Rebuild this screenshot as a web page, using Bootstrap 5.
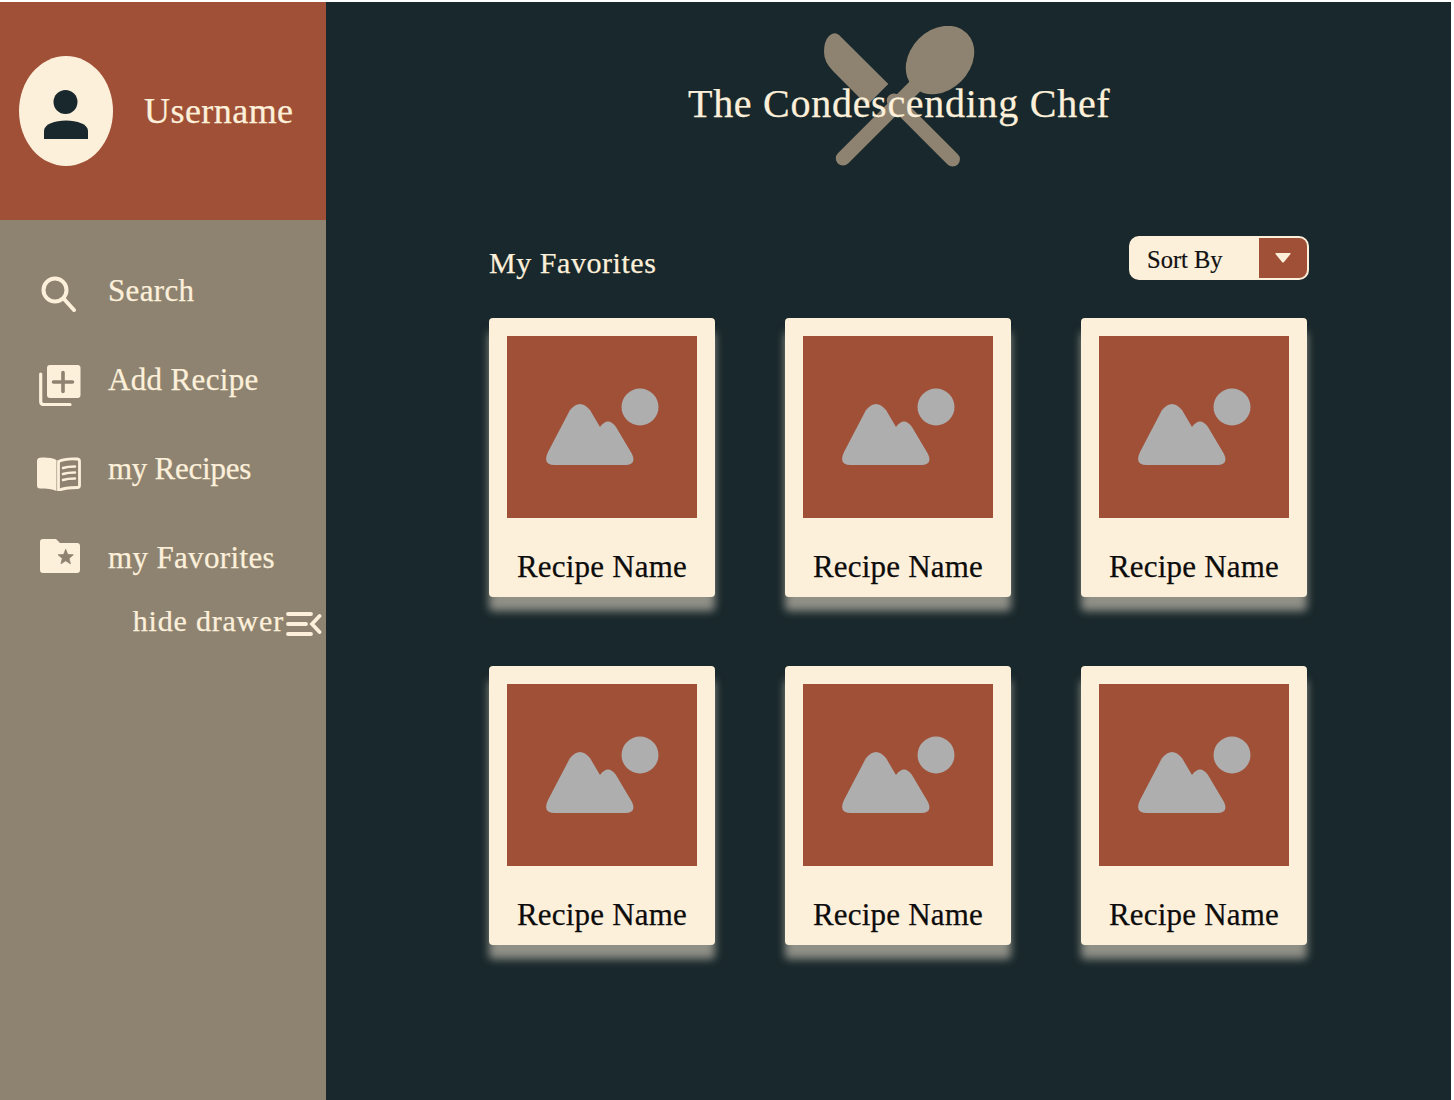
<!DOCTYPE html>
<html lang="en">
<head>
<meta charset="utf-8">
<title>The Condescending Chef</title>
<link rel="stylesheet" href="https://cdn.jsdelivr.net/npm/bootstrap@5.3.0/dist/css/bootstrap.min.css">
<style>
html,body{height:1100px;overflow:hidden}
body{background:#fff;font-family:"Liberation Serif",serif;color:#fdf0db;padding-top:2px;padding-right:3px;-webkit-text-stroke:.25px}
.shell{height:1098px;background:#19282c}
.drawer{width:326px;background:#8e8370}
.drawer-head{height:218px;background:#a05036;padding:54px 0 0 19px}
.avatar{width:94px;height:110px;border-radius:50%;background:#fdf0db}
.avatar svg{margin-top:8px}
.uname{font-size:36px;height:110px;line-height:110px;margin-left:31px;letter-spacing:.45px}
.draw-nav{padding:53px 0 0 37px}
.draw-item{height:36px;margin-bottom:53px;font-size:31px;line-height:36px;letter-spacing:.35px}
.draw-ico{width:71px;flex:none}
.draw-ico svg{display:block}
.ico-search{margin:5px 0 0 4px}
.ico-add{margin:10px 0 0 2px}
.ico-book{margin:9px 0 0 0}
.ico-fold{margin:-5px 0 0 2px}
.tight-text{letter-spacing:-.25px}
.hide-row{font-size:30px;line-height:36px;margin-top:27px;padding-right:4px;letter-spacing:.8px}
.hide-row svg{margin:5px 0 0 2px;flex:none}
.main-pane{padding:0 142px 0 163px}
.title-wrap{height:216px;position:relative}
.title-logo{position:absolute;left:335px;top:24px}
.app-title{position:absolute;left:199px;top:79px;font-size:40px;line-height:46px;margin:0;letter-spacing:.72px;white-space:nowrap}
.sec-head{height:100px;padding:18px 0 0}
.sec-title{font-size:30px;line-height:54px;margin:0;letter-spacing:.55px}
.sort-box{width:180px;height:44px;background:#fdf0db;border:2px solid #fdf0db;border-radius:10px;overflow:hidden;color:#111;font-size:24.5px;padding-left:16px;-webkit-text-stroke:.2px}
.sort-caret{width:48px;background:#a05036}
.recipes{display:grid;grid-template-columns:repeat(3,226px);column-gap:70px;row-gap:69px}
.rec-card{height:279px;background:#fdf0db;border-radius:4px;padding:18px;box-shadow:0 14px 8px rgba(253,240,219,.52)}
.rec-img{height:182px;background:#a05036}
.rec-name{font-size:31px;line-height:36px;margin-top:31px;text-align:center;letter-spacing:.2px;color:#0c0c0c}
</style>
</head>
<body>
<div class="shell d-flex">
  <aside class="drawer flex-shrink-0">
    <div class="drawer-head d-flex align-items-start">
      <div class="avatar d-flex align-items-center justify-content-center">
        <svg width="46" height="50" viewBox="0 0 46 50"><circle cx="22.500" cy="12" r="12" fill="#19282c"/><path d="M1 49V41C1 34 12 30.500 23 30.500s22 3.500 22 10.500v8z" fill="#19282c"/></svg>
      </div>
      <div class="uname">Username</div>
    </div>
    <nav class="draw-nav">
      <div class="draw-item d-flex align-items-center">
        <span class="draw-ico"><svg class="ico-search" width="36" height="36" viewBox="0 0 36 36" fill="none" stroke="#fdf0db" stroke-width="4" stroke-linecap="round"><circle cx="14" cy="14" r="11.500"/><path d="M23 23l10 11"/></svg></span>Search
      </div>
      <div class="draw-item d-flex align-items-center">
        <span class="draw-ico"><svg class="ico-add" width="42" height="41" viewBox="0 0 42 41"><path d="M1.700 9v27.500q0 3 3 3H31" fill="none" stroke="#fdf0db" stroke-width="3.200" stroke-linecap="round"/><rect x="8" y="0" width="33.500" height="33" rx="3" fill="#fdf0db"/><path d="M24 7.500v19M14.500 17h19" stroke="#8e8370" stroke-width="3.600" stroke-linecap="round"/></svg></span>Add Recipe
      </div>
      <div class="draw-item d-flex align-items-center">
        <span class="draw-ico"><svg class="ico-book" width="44" height="34" viewBox="0 0 44 34"><path d="M0 4q0-3 3-3.200c6-.5 12 0 16.500 2.200v31c-4-2-10-2.500-16.500-2.500q-3 0-3-3z" fill="#fdf0db"/><path d="M21.500 4.500c4-2 12-3 19-2.500 1.500.2 2 1 2 2.500v24c0 1.500-.6 2-2 2-7 0-14 .5-19 3z" fill="none" stroke="#fdf0db" stroke-width="2.800"/><path d="M26 11c3-1 8-1.500 12-1.500M26 17c3-1 8-1.500 12-1.500M26 23c3-1 8-1.500 12-1.500" fill="none" stroke="#fdf0db" stroke-width="2.500" stroke-linecap="round"/></svg></span><span class="tight-text">my Recipes</span>
      </div>
      <div class="draw-item d-flex align-items-center mb-0">
        <span class="draw-ico"><svg class="ico-fold" width="42" height="36" viewBox="0 0 42 36"><path d="M1 4q0-3 3-3h13l4 4h17q3 0 3 3v24q0 3-3 3H4q-3 0-3-3z" fill="#fdf0db"/><polygon transform="translate(26.700 19.300)" points="0,-8 2.100,-2.800 7.600,-2.500 3.400,1.100 4.700,6.500 0,3.500 -4.700,6.500 -3.400,1.100 -7.600,-2.500 -2.100,-2.800" fill="#8e8370" stroke="#8e8370" stroke-width=".8" stroke-linejoin="round"/></svg></span>my Favorites
      </div>
      <div class="hide-row d-flex justify-content-end align-items-center">hide drawer<svg width="36" height="24" viewBox="0 0 36 24" fill="none" stroke="#fdf0db" stroke-width="3.800" stroke-linecap="round"><path d="M2 2h23M2 12h18M2 22h23"/><path d="M33.500 4L26 12l7.500 8"/></svg></div>
    </nav>
  </aside>
  <main class="main-pane flex-grow-1">
    <div class="title-wrap">
      <svg class="title-logo" width="152" height="142" viewBox="0 0 152 142" fill="#8e8370"><path d="M5 10Q11 4 17 11L64.300 58 43 79.300 9 45Q0 36 0 26 0 15 5 10z"/><path d="M70 74.700l58.700 58.600M19 132.300l81-81" fill="none" stroke="#8e8370" stroke-width="14.500" stroke-linecap="round"/><ellipse cx="116" cy="34" rx="38" ry="30" transform="rotate(-45 116 34)"/></svg>
      <h1 class="app-title fw-normal">The Condescending Chef</h1>
    </div>
    <div class="sec-head d-flex justify-content-between align-items-start">
      <h2 class="sec-title fw-normal">My Favorites</h2>
      <div class="sort-box d-flex justify-content-between align-items-center">
        <span class="mt-1">Sort By</span>
        <span class="sort-caret h-100 d-flex align-items-center justify-content-center"><svg width="16" height="10" viewBox="0 0 16 10"><path d="M1 0h14q1 0 .5 1L9 9q-1 1-2 0L.5 1Q0 0 1 0z" fill="#fdf0db"/></svg></span>
      </div>
    </div>
    <div class="recipes">
      <div class="rec-card"><div class="rec-img d-flex align-items-center justify-content-center"><svg width="114" height="78" viewBox="0 0 114 78" fill="#aeaeae"><circle cx="95" cy="19" r="18.500"/><path d="M25 22Q35 10 45 22L55 39Q63 28 71 39L87 66Q92 77 80 77H10Q-3 77 3 64z"/></svg></div><div class="rec-name">Recipe Name</div></div>
      <div class="rec-card"><div class="rec-img d-flex align-items-center justify-content-center"><svg width="114" height="78" viewBox="0 0 114 78" fill="#aeaeae"><circle cx="95" cy="19" r="18.500"/><path d="M25 22Q35 10 45 22L55 39Q63 28 71 39L87 66Q92 77 80 77H10Q-3 77 3 64z"/></svg></div><div class="rec-name">Recipe Name</div></div>
      <div class="rec-card"><div class="rec-img d-flex align-items-center justify-content-center"><svg width="114" height="78" viewBox="0 0 114 78" fill="#aeaeae"><circle cx="95" cy="19" r="18.500"/><path d="M25 22Q35 10 45 22L55 39Q63 28 71 39L87 66Q92 77 80 77H10Q-3 77 3 64z"/></svg></div><div class="rec-name">Recipe Name</div></div>
      <div class="rec-card"><div class="rec-img d-flex align-items-center justify-content-center"><svg width="114" height="78" viewBox="0 0 114 78" fill="#aeaeae"><circle cx="95" cy="19" r="18.500"/><path d="M25 22Q35 10 45 22L55 39Q63 28 71 39L87 66Q92 77 80 77H10Q-3 77 3 64z"/></svg></div><div class="rec-name">Recipe Name</div></div>
      <div class="rec-card"><div class="rec-img d-flex align-items-center justify-content-center"><svg width="114" height="78" viewBox="0 0 114 78" fill="#aeaeae"><circle cx="95" cy="19" r="18.500"/><path d="M25 22Q35 10 45 22L55 39Q63 28 71 39L87 66Q92 77 80 77H10Q-3 77 3 64z"/></svg></div><div class="rec-name">Recipe Name</div></div>
      <div class="rec-card"><div class="rec-img d-flex align-items-center justify-content-center"><svg width="114" height="78" viewBox="0 0 114 78" fill="#aeaeae"><circle cx="95" cy="19" r="18.500"/><path d="M25 22Q35 10 45 22L55 39Q63 28 71 39L87 66Q92 77 80 77H10Q-3 77 3 64z"/></svg></div><div class="rec-name">Recipe Name</div></div>
    </div>
  </main>
</div>
<script src="https://cdn.jsdelivr.net/npm/bootstrap@5.3.0/dist/js/bootstrap.bundle.min.js"></script>
</body>
</html>
